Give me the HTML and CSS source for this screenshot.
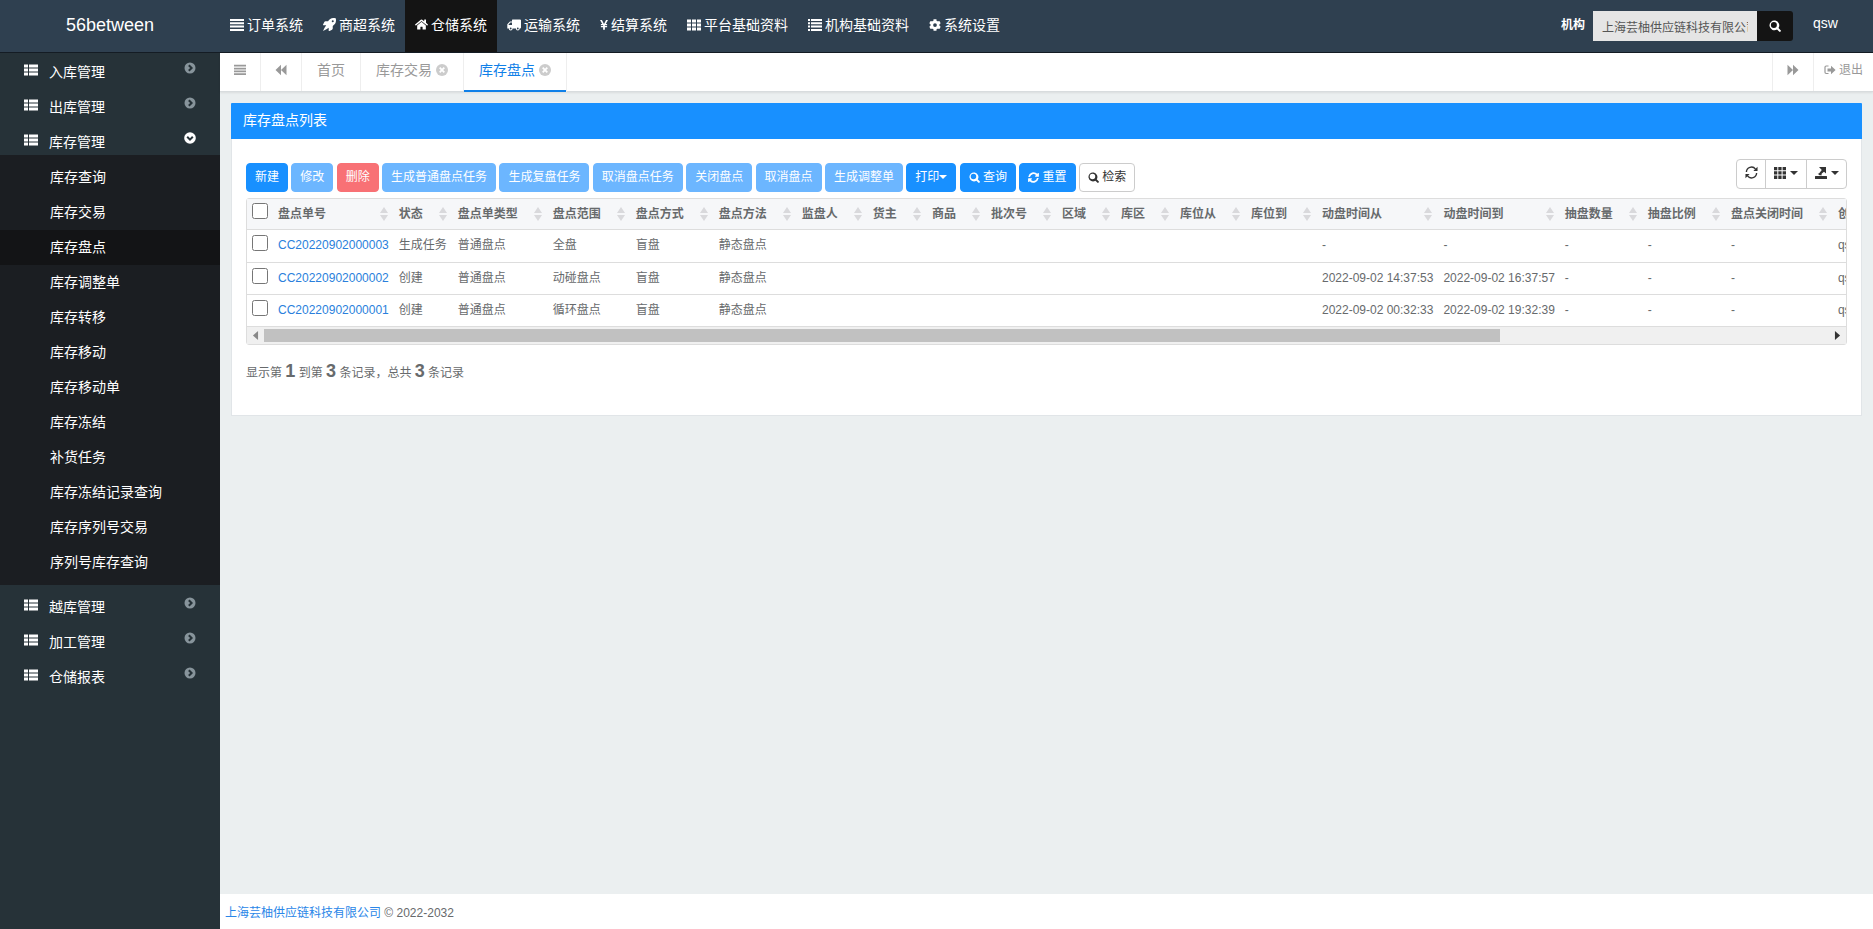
FILE: index.html
```html
<!DOCTYPE html>
<html lang="zh-CN">
<head>
<meta charset="utf-8">
<title>库存盘点</title>
<link rel="stylesheet" href="styles.css">
</head>
<body>
<svg class="sprite" aria-hidden="true">
  <symbol id="i-bars" viewBox="0 0 14 14"><path d="M0 1h14v2H0zM0 4.3h14v2H0zM0 7.6h14v2H0zM0 10.9h14v2H0z"/></symbol>
  <symbol id="i-rocket" viewBox="0 0 512 512"><path d="M505 19c-1-6-7-11-12-13C460 0 435 0 410 0 308 0 246 55 200 128H95c-16 0-35 12-43 27L3 254a24 24 0 0 0 21 34h104l-60 90-68 134 134-68 90-60v104a24 24 0 0 0 34 21l99-49c15-8 27-27 27-43V312c73-46 128-108 128-210 0-25 0-50-7-83zM384 168a40 40 0 1 1 0-80 40 40 0 0 1 0 80z"/></symbol>
  <symbol id="i-home" viewBox="0 0 576 512"><path d="M280 148 96 300v164a16 16 0 0 0 16 16h112a16 16 0 0 0 16-16v-96a16 16 0 0 1 16-16h64a16 16 0 0 1 16 16v96a16 16 0 0 0 16 16h112a16 16 0 0 0 16-16V300L296 148a12 12 0 0 0-16 0zM572 251l-84-69V44a12 12 0 0 0-12-12h-56a12 12 0 0 0-12 12v72l-90-74a48 48 0 0 0-61 0L4 251a12 12 0 0 0-2 17l26 31a12 12 0 0 0 17 2l235-194a12 12 0 0 1 16 0l235 194a12 12 0 0 0 17-2l25-31a12 12 0 0 0-1-17z"/></symbol>
  <symbol id="i-truck" viewBox="0 0 14 14"><path d="M5.5 1.5H13q1 0 1 .8v7.2q0 1-1 1h-.3a1.9 1.9 0 0 1-3.800 0H5.600a1.900 1.900 0 0 1-3.800 0H.3V6.200L3 3.500h2V2q0-.5.5-.5zM1.600 7H5V4.600H3.400L1.600 6.400zM3.700 9.600a.9.9 0 1 0 0 1.800.9.900 0 0 0 0-1.800zm7.100 0a.9.900 0 1 0 0 1.800.9.900 0 0 0 0-1.800z"/></symbol>
  <symbol id="i-yen" viewBox="0 0 9 14"><path d="M0 1.500h2.200L4.500 6l2.300-4.500H9L6.500 6H8v1.200H5.500v1H8v1.200H5.500v3h-2v-3H1V8.200h2.500v-1H1V6h1.500z"/></symbol>
  <symbol id="i-th" viewBox="0 0 14 14"><path d="M0 1.500h4v3H0zM5 1.500h4v3H5zM10 1.500h4v3h-4zM0 5.500h4v3H0zM5 5.500h4v3H5zM10 5.500h4v3h-4zM0 9.500h4v3H0zM5 9.500h4v3H5zM10 9.500h4v3h-4z"/></symbol>
  <symbol id="i-glyph-th" viewBox="0 0 12 12"><path d="M0 0h3.300v3.300H0zM4.300 0h3.300v3.300H4.300zM8.600 0H12v3.300H8.600zM0 4.300h3.300v3.300H0zM4.300 4.300h3.300v3.300H4.300zM8.600 4.300H12v3.300H8.600zM0 8.600h3.300V12H0zM4.300 8.600h3.300V12H4.300zM8.600 8.600H12V12H8.600z"/></symbol>
  <symbol id="i-list" viewBox="0 0 14 14"><path d="M0 1h2v2H0zM3 1h11v2H3zM0 4.300h2v2H0zM3 4.300h11v2H3zM0 7.600h2v2H0zM3 7.600h11v2H3zM0 10.900h2v2H0zM3 10.900h11v2H3z"/></symbol>
  <symbol id="i-thlist" viewBox="0 0 14 14"><path d="M0 1.500h4v3H0zM5 1.500h9v3H5zM0 5.500h4v3H0zM5 5.500h9v3H5zM0 9.500h4v3H0zM5 9.500h9v3H5z"/></symbol>
  <symbol id="i-cog" viewBox="0 0 512 512"><path fill-rule="evenodd" d="M487 316l-42-25a193 193 0 0 0 0-71l42-24c5-3 7-9 6-14a249 249 0 0 0-55-95c-4-4-10-5-15-2l-42 24a188 188 0 0 0-62-36V25c0-6-4-11-9-12a251 251 0 0 0-109 0c-6 1-10 6-10 12v49a196 196 0 0 0-61 35L88 85c-5-3-11-2-15 2a246 246 0 0 0-55 95c-2 6 1 12 6 15l42 24a193 193 0 0 0 0 71l-42 24c-5 3-8 9-6 15a249 249 0 0 0 55 94c4 4 10 5 15 3l42-25a188 188 0 0 0 62 36v49c0 6 4 11 9 12a251 251 0 0 0 110 0c5-1 9-6 9-12v-49a196 196 0 0 0 61-36l43 25c4 3 11 2 15-3a246 246 0 0 0 54-94c2-6 0-12-6-15zM256 336a80 80 0 1 1 0-160 80 80 0 0 1 0 160z"/></symbol>
  <symbol id="i-search" viewBox="0 0 512 512"><path fill-rule="evenodd" d="M505 443L405 343a208 208 0 1 0-62 62l100 100c9 9 24 9 34 0l28-28c9-10 9-25 0-34zM208 336a128 128 0 1 1 0-256 128 128 0 0 1 0 256z"/></symbol>
  <symbol id="i-sync" viewBox="0 0 512 512"><path d="M371 142a162 162 0 0 0-273 76c-1 6-6 10-12 10H29c-8 0-14-7-12-14a248 248 0 0 1 415-130l36-36c15-15 41-4 41 17v135a24 24 0 0 1-24 24H350c-21 0-32-26-17-41zM27 288h134c21 0 32 26 17 41l-38 38a162 162 0 0 0 273-76c1-5 6-9 12-9h57c8 0 14 7 12 14A248 248 0 0 1 80 428l-36 36c-15 15-41 4-41-17V312a24 24 0 0 1 24-24z"/></symbol>
  <symbol id="i-refresh" viewBox="0 0 14 14"><path fill="none" stroke="currentColor" stroke-width="1.500" d="M1.500 6.500A5.500 5.500 0 0 1 11.300 3.300M12.500 7.500A5.500 5.500 0 0 1 2.700 10.700"/><path d="M13.500.8v4.600H9zM.5 13.200V8.600H5z"/></symbol>
  <symbol id="i-back" viewBox="0 0 12 12"><path d="M6 .8v10.400L.5 6zM11.500.8v10.400L6 6z"/></symbol>
  <symbol id="i-forward" viewBox="0 0 12 12"><path d="M6 .8v10.400L11.500 6zM.5.800v10.400L6 6z"/></symbol>
  <symbol id="i-close" viewBox="0 0 12 12"><circle cx="6" cy="6" r="6"/><path stroke="#fff" stroke-width="1.800" d="M3.700 3.700l4.600 4.600M8.300 3.700L3.700 8.300"/></symbol>
  <symbol id="i-right" viewBox="0 0 12 12"><circle cx="6" cy="6" r="5.500"/><path class="chev" d="M4.800 3.200L7.600 6 4.800 8.800"/></symbol>
  <symbol id="i-down" viewBox="0 0 12 12"><circle cx="6" cy="6" r="5.800"/><path class="chev" d="M3.200 4.800L6 7.600l2.800-2.800"/></symbol>
  <symbol id="i-exit" viewBox="0 0 12 12"><path fill="none" stroke="currentColor" stroke-width="1.200" d="M4.500 2H2.200Q1 2 1 3.200v5.100q0 1.200 1.200 1.200h2.300"/><path d="M7 1.800L11.600 6 7 10.200V7.500H3.500v-3H7z"/></symbol>
  <symbol id="i-export" viewBox="0 0 12 12"><path d="M.5 9h11q.5 0 .5.500V12H0V9.500Q0 9 .5 9zM4 0h7v6.500L9 4.800 6.800 6.600Q6 7.600 7 8.200H4.600L2.400 6.600q1.200.5 2-.5L6.800 3z"/></symbol>
  <symbol id="i-caret" viewBox="0 0 8 4"><path d="M0 0h8L4 4z"/></symbol>
</svg>

<header class="topbar">
  <a class="logo" href="#">56between</a>
  <nav class="systems">
    <a href="#"><svg class="icon"><use href="#i-bars"/></svg>订单系统</a>
    <a href="#"><svg class="icon i13"><use href="#i-rocket"/></svg>商超系统</a>
    <a href="#" class="active"><svg class="icon i13"><use href="#i-home"/></svg>仓储系统</a>
    <a href="#"><svg class="icon"><use href="#i-truck"/></svg>运输系统</a>
    <a href="#"><svg class="icon i8"><use href="#i-yen"/></svg>结算系统</a>
    <a href="#"><svg class="icon"><use href="#i-th"/></svg>平台基础资料</a>
    <a href="#"><svg class="icon"><use href="#i-list"/></svg>机构基础资料</a>
    <a href="#"><svg class="icon i12"><use href="#i-cog"/></svg>系统设置</a>
  </nav>
  <form class="org">
    <label for="org">机构</label>
    <input id="org" type="text" value="上海芸柚供应链科技有限公司" readonly>
    <button type="button" aria-label="搜索"><svg class="icon i12"><use href="#i-search"/></svg></button>
  </form>
  <a class="user" href="#">qsw</a>
</header>

<div class="shell">
  <aside class="sidebar">
    <ul class="menu">
      <li><a href="#"><svg class="icon"><use href="#i-thlist"/></svg><span>入库管理</span><svg class="arrow"><use href="#i-right"/></svg></a></li>
      <li><a href="#"><svg class="icon"><use href="#i-thlist"/></svg><span>出库管理</span><svg class="arrow"><use href="#i-right"/></svg></a></li>
      <li class="open"><a href="#"><svg class="icon"><use href="#i-thlist"/></svg><span>库存管理</span><svg class="arrow"><use href="#i-down"/></svg></a>
        <ul class="submenu">
          <li><a href="#">库存查询</a></li>
          <li><a href="#">库存交易</a></li>
          <li><a href="#" class="active">库存盘点</a></li>
          <li><a href="#">库存调整单</a></li>
          <li><a href="#">库存转移</a></li>
          <li><a href="#">库存移动</a></li>
          <li><a href="#">库存移动单</a></li>
          <li><a href="#">库存冻结</a></li>
          <li><a href="#">补货任务</a></li>
          <li><a href="#">库存冻结记录查询</a></li>
          <li><a href="#">库存序列号交易</a></li>
          <li><a href="#">序列号库存查询</a></li>
        </ul>
      </li>
      <li><a href="#"><svg class="icon"><use href="#i-thlist"/></svg><span>越库管理</span><svg class="arrow"><use href="#i-right"/></svg></a></li>
      <li><a href="#"><svg class="icon"><use href="#i-thlist"/></svg><span>加工管理</span><svg class="arrow"><use href="#i-right"/></svg></a></li>
      <li><a href="#"><svg class="icon"><use href="#i-thlist"/></svg><span>仓储报表</span><svg class="arrow"><use href="#i-right"/></svg></a></li>
    </ul>
  </aside>

  <div class="content">
    <nav class="tabs">
      <button class="tool" type="button" aria-label="菜单"><svg class="icon i12"><use href="#i-bars"/></svg></button>
      <button class="tool" type="button" aria-label="左移"><svg class="icon i12"><use href="#i-back"/></svg></button>
      <a class="tab" href="#">首页</a>
      <a class="tab" href="#">库存交易<svg class="icon i12"><use href="#i-close"/></svg></a>
      <a class="tab active" href="#">库存盘点<svg class="icon i12"><use href="#i-close"/></svg></a>
      <button class="tool right" type="button" aria-label="右移"><svg class="icon i12"><use href="#i-forward"/></svg></button>
      <a class="exit" href="#"><svg class="icon i12"><use href="#i-exit"/></svg>退出</a>
    </nav>

    <main>
      <section class="panel">
        <h1>库存盘点列表</h1>
        <div class="body">
          <div class="toolbar">
            <div class="actions">
              <button class="btn" type="button">新建</button>
              <button class="btn" type="button" disabled>修改</button>
              <button class="btn danger" type="button" disabled>删除</button>
              <button class="btn" type="button" disabled>生成普通盘点任务</button>
              <button class="btn" type="button" disabled>生成复盘任务</button>
              <button class="btn" type="button" disabled>取消盘点任务</button>
              <button class="btn" type="button" disabled>关闭盘点</button>
              <button class="btn" type="button" disabled>取消盘点</button>
              <button class="btn" type="button" disabled>生成调整单</button>
              <button class="btn" type="button">打印<svg class="caret"><use href="#i-caret"/></svg></button>
              <button class="btn" type="button"><svg class="icon i11"><use href="#i-search"/></svg> 查询</button>
              <button class="btn" type="button"><svg class="icon i11"><use href="#i-sync"/></svg> 重置</button>
              <button class="btn plain" type="button"><svg class="icon i11"><use href="#i-search"/></svg> 检索</button>
            </div>
            <div class="group">
              <button type="button" aria-label="刷新"><svg class="icon i13"><use href="#i-refresh"/></svg></button>
              <button type="button" aria-label="列"><svg class="icon i12"><use href="#i-glyph-th"/></svg><svg class="caret"><use href="#i-caret"/></svg></button>
              <button type="button" aria-label="导出"><svg class="icon i12"><use href="#i-export"/></svg><svg class="caret"><use href="#i-caret"/></svg></button>
            </div>
          </div>

          <div class="grid">
            <div class="viewport">
              <table>
                <thead>
                  <tr>
                    <th class="check"><input type="checkbox" aria-label="全选"></th>
                    <th>盘点单号</th><th>状态</th><th>盘点单类型</th><th>盘点范围</th><th>盘点方式</th><th>盘点方法</th><th>监盘人</th><th>货主</th><th>商品</th><th>批次号</th><th>区域</th><th>库区</th><th>库位从</th><th>库位到</th><th>动盘时间从</th><th>动盘时间到</th><th>抽盘数量</th><th>抽盘比例</th><th>盘点关闭时间</th><th>创建人</th>
                  </tr>
                </thead>
                <tbody>
                  <tr>
                    <td class="check"><input type="checkbox" aria-label="CC20220902000003"></td>
                    <td><a href="#">CC20220902000003</a></td><td>生成任务</td><td>普通盘点</td><td>全盘</td><td>盲盘</td><td>静态盘点</td><td></td><td></td><td></td><td></td><td></td><td></td><td></td><td></td><td>-</td><td>-</td><td>-</td><td>-</td><td>-</td><td>qsw</td>
                  </tr>
                  <tr>
                    <td class="check"><input type="checkbox" aria-label="CC20220902000002"></td>
                    <td><a href="#">CC20220902000002</a></td><td>创建</td><td>普通盘点</td><td>动碰盘点</td><td>盲盘</td><td>静态盘点</td><td></td><td></td><td></td><td></td><td></td><td></td><td></td><td></td><td>2022-09-02 14:37:53</td><td>2022-09-02 16:37:57</td><td>-</td><td>-</td><td>-</td><td>qsw</td>
                  </tr>
                  <tr>
                    <td class="check"><input type="checkbox" aria-label="CC20220902000001"></td>
                    <td><a href="#">CC20220902000001</a></td><td>创建</td><td>普通盘点</td><td>循环盘点</td><td>盲盘</td><td>静态盘点</td><td></td><td></td><td></td><td></td><td></td><td></td><td></td><td></td><td>2022-09-02 00:32:33</td><td>2022-09-02 19:32:39</td><td>-</td><td>-</td><td>-</td><td>qsw</td>
                  </tr>
                </tbody>
              </table>
            </div>
            <div class="scroll"><i class="left"></i><div class="track"><div class="thumb"></div></div><i class="right"></i></div>
          </div>
          <p class="summary">显示第 <b>1</b> 到第 <b>3</b> 条记录，总共 <b>3</b> 条记录</p>
        </div>
      </section>
    </main>

    <footer><a href="#">上海芸柚供应链科技有限公司</a> © 2022-2032</footer>
  </div>
</div>
</body>
</html>
```

FILE: styles.css
```css
* { box-sizing: border-box; }
body {
  margin: 0;
  min-height: 100vh;
  display: flex;
  flex-direction: column;
  font: 12px/20px "Liberation Sans", "Noto Sans CJK SC", sans-serif;
  color: #676a6c;
}
a { text-decoration: none; color: inherit; }
button, input { font: inherit; color: inherit; }
button { padding: 0; border: 0; background: none; }
ul { list-style: none; margin: 0; padding: 0; }
.sprite { position: absolute; width: 0; height: 0; }
.icon { width: 14px; height: 14px; fill: currentColor; flex: none; }
.i13 { width: 13px; height: 13px; }
.i12 { width: 12px; height: 12px; }
.i11 { width: 11px; height: 11px; }
.i8 { width: 8px; }
.caret { width: 8px; height: 4px; fill: currentColor; }

.topbar {
  display: flex;
  height: 53px;
  background: #2f4050;
  border-bottom: 1px solid #141c24;
  color: #fff;
  font-size: 14px;
}
.logo { width: 220px; font-size: 18px; line-height: 50px; text-align: center; }
.systems { display: flex; flex: 1; }
.systems a { display: flex; align-items: center; gap: 3px; padding: 0 10px 3px; white-space: nowrap; }
.systems .active { background: #141414; }
.org { display: flex; align-items: center; padding-right: 20px; font-size: 12px; }
.org label { font-weight: bold; margin-right: 8px; padding-bottom: 2px; }
.org input { width: 164px; height: 30px; padding: 0 9px; border: 0; background: #e5e5e5; color: #555; outline: 0; }
.org button { display: grid; place-items: center; width: 36px; height: 30px; background: #141414; border-radius: 0 3px 3px 0; }
.user { width: 60px; line-height: 46px; }

.shell { display: flex; flex: 1; }
.sidebar { width: 220px; background: #263238; color: #fff; font-size: 14px; }
.menu > li > a { display: flex; align-items: center; height: 35px; padding: 9px 24px 0; }
.menu > li:first-child > a { height: 32px; padding-top: 6px; }
.menu span { flex: 1; margin-left: 11px; }
.menu .icon { margin-bottom: 4px; }
.arrow { width: 12px; height: 12px; fill: #87949b; margin: 0 0 8px; }
.open .arrow { fill: #fff; }
.chev { fill: none; stroke: #263238; stroke-width: 2; }
.submenu { padding: 5px 0; background: #1b1e22; }
.submenu a { display: block; padding-left: 50px; line-height: 35px; }
.submenu .active { background: #131416; }

.content { flex: 1; min-width: 0; display: flex; flex-direction: column; background: #ebeff0; }
.tabs {
  display: flex;
  height: 39px;
  background: #fff;
  border-bottom: 1px solid #d8dcde;
  box-shadow: 0 1px 2px #00000014;
  color: #999;
  font-size: 14px;
}
.tabs > * { display: flex; align-items: center; justify-content: center; padding-bottom: 5px; }
.tool { width: 41px; border-right: 1px solid #eee; }
.tool.right { width: 42px; margin-left: auto; border-left: 1px solid #eee; }
.tabs .tab { gap: 4px; padding: 0 15px 5px; border-right: 1px solid #eee; }
.tab .icon { color: #ccc; }
.tabs .active { color: #1080e8; box-shadow: inset 0 -2px #1080e8; margin-bottom: -1px; padding-bottom: 6px; }
.exit { width: 59px; gap: 3px; font-size: 12px; }

main { flex: 1; padding: 11px; }
.panel { background: #fff; border: 1px solid #e1e5e8; border-top: 0; }
h1 { margin: 0 -1px; padding: 0 12px 2px; background: #1890ff; color: #fff; font-size: 14px; font-weight: normal; line-height: 34px; border-radius: 1px 1px 0 0; }
.body { padding: 20px 14px 30px; }
.toolbar { display: flex; justify-content: space-between; padding-bottom: 6px; }
.actions { padding-top: 4px; line-height: 29px; }
.btn { padding: 0 8px 1px; height: 29px; line-height: 26px; border: 1px solid #1890ff; border-radius: 4px; background: #1890ff; color: #fff; vertical-align: top; }
.btn:disabled { background: #6cb6ff; border-color: #6cb6ff; }
.btn.danger:disabled { background: #f87175; border-color: #f87175; }
.btn.plain { background: #fff; border-color: #ccc; color: #333; }
.btn .icon { vertical-align: -2px; }
.btn .caret { vertical-align: 2px; }
.group { display: flex; height: 30px; border: 1px solid #ccc; border-radius: 4px; color: #333; }
.group button { display: flex; align-items: center; justify-content: center; gap: 4px; width: 41px; padding-bottom: 3px; }
.group button:first-child { width: 28px; }
.group button:last-child { width: 40px; }
.group button + button { border-left: 1px solid #ccc; }

.grid { border: 1px solid #ddd; border-radius: 3px; }
.viewport { overflow: hidden; }
table { border-collapse: separate; border-spacing: 0; width: max-content; }
th, td { height: 32px; padding: 0 5px 2px; border-bottom: 1px solid #ddd; text-align: left; white-space: nowrap; }
th {
  height: 31px;
  padding: 0 30px 0 5px;
  background: #f6f7f9 url("data:image/svg+xml,%3Csvg xmlns='http://www.w3.org/2000/svg' width='8' height='14'%3E%3Cpath fill='%23d9d9dc' d='M0 6l4-6 4 6zM0 8l4 6 4-6z'/%3E%3C/svg%3E") no-repeat right 6px center;
}
tbody tr:first-child td { height: 33px; }
td a { color: #2a7fdc; }
th.check, td.check { width: 26px; padding: 0 5px 6px; background-image: none; }
.check input { display: block; width: 16px; height: 16px; margin: 0; }
.scroll { display: flex; align-items: center; height: 17px; background: #f0f0f0; }
.scroll i { width: 17px; height: 9px; clip-path: polygon(35% 50%, 65% 0, 65% 100%); background: #888; }
.scroll .right { clip-path: polygon(65% 50%, 35% 0, 35% 100%); background: #333; }
.track { flex: 1; height: 13px; }
.thumb { width: 79%; height: 13px; background: #c1c1c1; }
.summary { margin: 14px 0 0; line-height: 24px; }
.summary b { font-size: 18px; }

footer { height: 35px; padding: 9px 5px; background: #fff; }
footer a { color: #2a86e8; }
```
